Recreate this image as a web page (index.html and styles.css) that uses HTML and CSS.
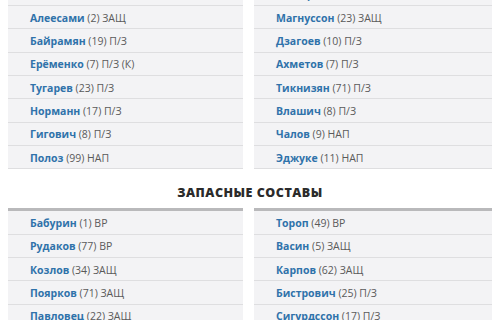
FILE: index.html
```html
<!DOCTYPE html>
<html lang="ru">
<head>
<meta charset="utf-8">
<link rel="stylesheet" href="styles.css">
</head>
<body>
<div class="page">
  <div class="lineups">
    <ul class="team">
      <li class="row"><span class="name">Ятимов</span> (1) ВР</li>
      <li class="row"><span class="name">Алеесами</span> (2) ЗАЩ</li>
      <li class="row"><span class="name">Байрамян</span> (19) П/З</li>
      <li class="row"><span class="name">Ерёменко</span> (7) П/З (К)</li>
      <li class="row"><span class="name">Тугарев</span> (23) П/З</li>
      <li class="row"><span class="name">Норманн</span> (17) П/З</li>
      <li class="row"><span class="name">Гигович</span> (8) П/З</li>
      <li class="row"><span class="name">Полоз</span> (99) НАП</li>
    </ul>
    <ul class="team">
      <li class="row"><span class="name">Акинфеев</span> (35) ВР</li>
      <li class="row"><span class="name">Магнуссон</span> (23) ЗАЩ</li>
      <li class="row"><span class="name">Дзагоев</span> (10) П/З</li>
      <li class="row"><span class="name">Ахметов</span> (7) П/З</li>
      <li class="row"><span class="name">Тикнизян</span> (71) П/З</li>
      <li class="row"><span class="name">Влашич</span> (8) П/З</li>
      <li class="row"><span class="name">Чалов</span> (9) НАП</li>
      <li class="row"><span class="name">Эджуке</span> (11) НАП</li>
    </ul>
  </div>
  <h2 class="section-title">ЗАПАСНЫЕ СОСТАВЫ</h2>
  <div class="lineups">
    <ul class="team bench">
      <li class="row"><span class="name">Бабурин</span> (1) ВР</li>
      <li class="row"><span class="name">Рудаков</span> (77) ВР</li>
      <li class="row"><span class="name">Козлов</span> (34) ЗАЩ</li>
      <li class="row"><span class="name">Поярков</span> (71) ЗАЩ</li>
      <li class="row"><span class="name">Павловец</span> (22) ЗАЩ</li>
    </ul>
    <ul class="team bench">
      <li class="row"><span class="name">Тороп</span> (49) ВР</li>
      <li class="row"><span class="name">Васин</span> (5) ЗАЩ</li>
      <li class="row"><span class="name">Карпов</span> (62) ЗАЩ</li>
      <li class="row"><span class="name">Бистрович</span> (25) П/З</li>
      <li class="row"><span class="name">Сигурдссон</span> (17) П/З</li>
    </ul>
  </div>
</div>
</body>
</html>
```
FILE: styles.css
```css
html, body {
  margin: 0;
  padding: 0;
  background: #ffffff;
}
body {
  font-family: "Open Sans", "Liberation Sans", sans-serif;
  overflow: hidden;
}
.page {
  padding: 0 8px 0 8px;
  margin-top: -17.33px;
}
.lineups {
  display: grid;
  grid-template-columns: 235px 238px;
  column-gap: 11px;
}
.team {
  list-style: none;
  margin: 0;
  padding: 0;
  background: #f3f3f5;
}
.team.bench {
  border-top: 3px solid #b9b9bb;
}
.row {
  box-sizing: border-box;
  height: 23.33px;
  display: flex;
  align-items: center;
  padding-left: 22px;
  padding-top: 1px;
  border-bottom: 1px solid #dedee0;
  font-size: 10.5px;
  color: #5a5a5a;
  white-space: pre;
}
.name {
  color: #2f72aa;
  font-weight: 700;
}
.section-title {
  margin: 0;
  padding: 16px 0 8px 0;
  line-height: 15px;
  text-align: center;
  font-size: 12.5px;
  font-weight: 800;
  color: #2b2b2b;
  letter-spacing: 0.5px;
}
```
